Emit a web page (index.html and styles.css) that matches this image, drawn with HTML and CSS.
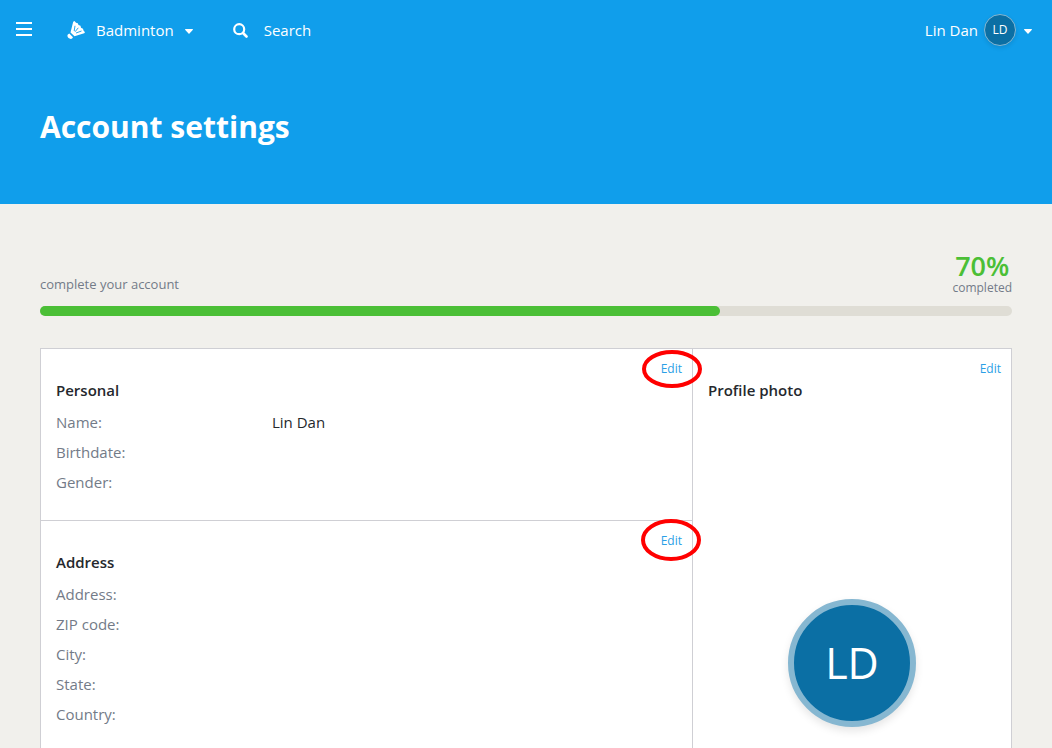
FILE: index.html
```html
<!DOCTYPE html>
<html lang="en">
<head>
<meta charset="utf-8">
<meta name="viewport" content="width=device-width, initial-scale=1">
<title>Account settings</title>
<link rel="stylesheet" href="styles.css">
</head>
<body>
<header class="header">
  <nav class="topbar">
    <button class="nav-button menu" type="button" aria-label="Menu">
      <svg width="16" height="14" viewBox="0 0 16 14" fill="#fff"><path d="M0 0h16v2H0zM0 6h16v2H0zM0 12h16v2H0z"/></svg>
    </button>
    <button class="nav-button sport" type="button">
      <svg width="18" height="18" viewBox="0 0 18 18"><path d="M3.500 11.500 6.200.8 7.500 0 9 1.800l1.800.4.700 1.800 2 .8.500 2 2 1 .5 1.700L18 11.200l-.8 1L7.500 15.200z" fill="#fff"/><path d="M7.200 10 8 4.800M8 10.800 11.300 6.800M9 12l5.500-2" fill="none" stroke="#109eeb" stroke-width=".9"/><path d="m.8 13.500 1.500-1.100 3.700 3.800-.9 1.300C3 19 -.8 16 .8 13.500z" fill="#fff"/></svg>
      <span>Badminton</span>
      <svg class="caret" width="8" height="5" viewBox="0 0 8 5" fill="#fff"><path d="M.5 0h7q.8.500.200 1L4.500 4.400q-.5.500-1 0L.3 1Q-.3.500.5 0z"/></svg>
    </button>
    <button class="nav-button search" type="button">
      <svg width="15" height="15" viewBox="0 0 15 15" fill="none" stroke="#fff"><circle cx="6.200" cy="6.200" r="5" stroke-width="2.200"/><path d="m10 10 3.500 3.500" stroke-width="2.600" stroke-linecap="round"/></svg>
      <span>Search</span>
    </button>
    <button class="nav-button user" type="button">
      <span>Lin Dan</span>
      <span class="avatar">LD</span>
      <svg class="caret" width="8" height="5" viewBox="0 0 8 5" fill="#fff"><path d="M.5 0h7q.8.500.200 1L4.500 4.400q-.5.500-1 0L.3 1Q-.3.500.5 0z"/></svg>
    </button>
  </nav>
  <h1 class="title">Account settings</h1>
</header>
<main class="content">
  <section class="progress">
    <div class="progress-head">
      <span id="progress-label">complete your account</span>
      <div class="progress-value"><strong class="percent">70%</strong><span>completed</span></div>
    </div>
    <div class="track" role="progressbar" aria-labelledby="progress-label" aria-valuenow="70" aria-valuemin="0" aria-valuemax="100"><div class="bar" style="width: 70%"></div></div>
  </section>
  <div class="panel">
    <div class="details">
      <section class="card">
        <div class="card-action"><a class="edit" href="#personal">Edit</a>
          <svg class="ring ring-personal" width="60" height="38" viewBox="0 0 60 38" aria-hidden="true"><ellipse cx="30" cy="19" rx="28" ry="17"/></svg></div>
        <h2 class="card-title">Personal</h2>
        <dl class="fields">
          <dt>Name:</dt><dd>Lin Dan</dd>
          <dt>Birthdate:</dt><dd></dd>
          <dt>Gender:</dt><dd></dd>
        </dl>
      </section>
      <section class="card">
        <div class="card-action"><a class="edit" href="#address">Edit</a>
          <svg class="ring ring-address" width="60" height="42" viewBox="0 0 60 42" aria-hidden="true"><ellipse cx="30" cy="21" rx="28" ry="19"/></svg></div>
        <h2 class="card-title">Address</h2>
        <dl class="fields">
          <dt>Address:</dt><dd></dd>
          <dt>ZIP code:</dt><dd></dd>
          <dt>City:</dt><dd></dd>
          <dt>State:</dt><dd></dd>
          <dt>Country:</dt><dd></dd>
        </dl>
      </section>
    </div>
    <section class="card photo">
      <div class="card-action"><a class="edit" href="#photo">Edit</a></div>
      <h2 class="card-title">Profile photo</h2>
      <div class="portrait">LD</div>
    </section>
  </div>
</main>
</body>
</html>
```
FILE: styles.css
```css
* {
  box-sizing: border-box;
}

body {
  margin: 0;
  min-height: 100vh;
  display: flex;
  flex-direction: column;
  background: #f1f0ec;
  color: #25282d;
  font: 15px/30px "Open Sans", sans-serif;
}

.header {
  height: 204px;
  background: #109eeb;
  color: #fff;
}

.topbar {
  display: flex;
  align-items: center;
  height: 60px;
  padding: 0 20px 0 16px;
}

.nav-button {
  display: flex;
  align-items: center;
  padding: 0;
  border: 0;
  background: none;
  color: inherit;
  font: inherit;
  cursor: pointer;
}

.menu {
  padding-bottom: 2px;
}

.sport {
  gap: 11px;
  margin-left: 35px;
}

.search {
  gap: 16px;
  margin-left: 40px;
}

.user {
  gap: 6px;
  margin-left: auto;
}

.caret {
  margin-top: 2px;
}

.user .caret {
  margin-left: 2px;
}

.avatar {
  width: 32px;
  height: 32px;
  border: 1px solid #86b7d1;
  border-radius: 50%;
  background: #0b6fa4;
  box-shadow: 0 2px 4px rgba(0, 0, 0, 0.1);
  font-size: 12px;
  text-align: center;
}

.title {
  margin: 0;
  padding: 46px 40px 0;
  font-size: 30px;
  line-height: 42px;
  font-weight: 700;
}

.content {
  flex: 1;
  display: flex;
  flex-direction: column;
  padding: 48px 40px 0;
}

.progress {
  margin-bottom: 32px;
  color: #737b88;
  font-size: 13px;
  line-height: 20px;
}

.progress-head {
  display: flex;
  justify-content: space-between;
  align-items: flex-end;
  height: 44px;
  margin-bottom: 10px;
  padding-bottom: 2px;
}

.progress-value {
  display: flex;
  flex-direction: column;
  align-items: center;
  font-size: 12px;
  line-height: 12px;
}

.percent {
  color: #4bbf36;
  font-size: 27px;
  line-height: 32px;
  font-weight: 600;
}

.track {
  height: 10px;
  border-radius: 5px;
  background: #dfddd5;
}

.bar {
  height: 10px;
  border-radius: 5px;
  background: #4bbf36;
}

.panel {
  flex: 1;
  display: flex;
  border: 1px solid #cfcfd4;
  border-bottom: 0;
  background: #fff;
}

.details {
  flex: 1;
}

.card {
  padding: 10px 15px 23px;
}

.card + .card {
  border-top: 1px solid #cfcfd4;
}

.photo {
  width: 319px;
  border-left: 1px solid #cfcfd4;
}

.card-action {
  position: relative;
  display: flex;
  justify-content: flex-end;
  height: 20px;
  margin-right: -5px;
  line-height: 20px;
}

.edit {
  color: #2b9fe6;
  font-size: 12px;
  text-decoration: none;
}

.ring {
  position: absolute;
  fill: none;
  stroke: #f00;
  stroke-width: 4px;
}

.ring-personal {
  top: -9px;
  right: -20px;
}

.ring-address {
  top: -12px;
  right: -19px;
}

.card-title {
  margin: 0;
  padding-bottom: 6px;
  font-size: 15px;
  line-height: 22px;
  font-weight: 600;
}

.fields {
  display: grid;
  grid-template-columns: 216px 1fr;
  grid-auto-rows: 30px;
  margin: 0;
}

.fields dt {
  color: #737b88;
}

.fields dd {
  margin: 0;
}

.portrait {
  width: 128px;
  height: 128px;
  margin: 192px auto 0;
  border: 6px solid #86b7d1;
  border-radius: 50%;
  background: #0b6fa4;
  box-shadow: 0 4px 8px rgba(0, 0, 0, 0.1);
  color: #fff;
  font-size: 43px;
  line-height: 116px;
  text-align: center;
}
```
